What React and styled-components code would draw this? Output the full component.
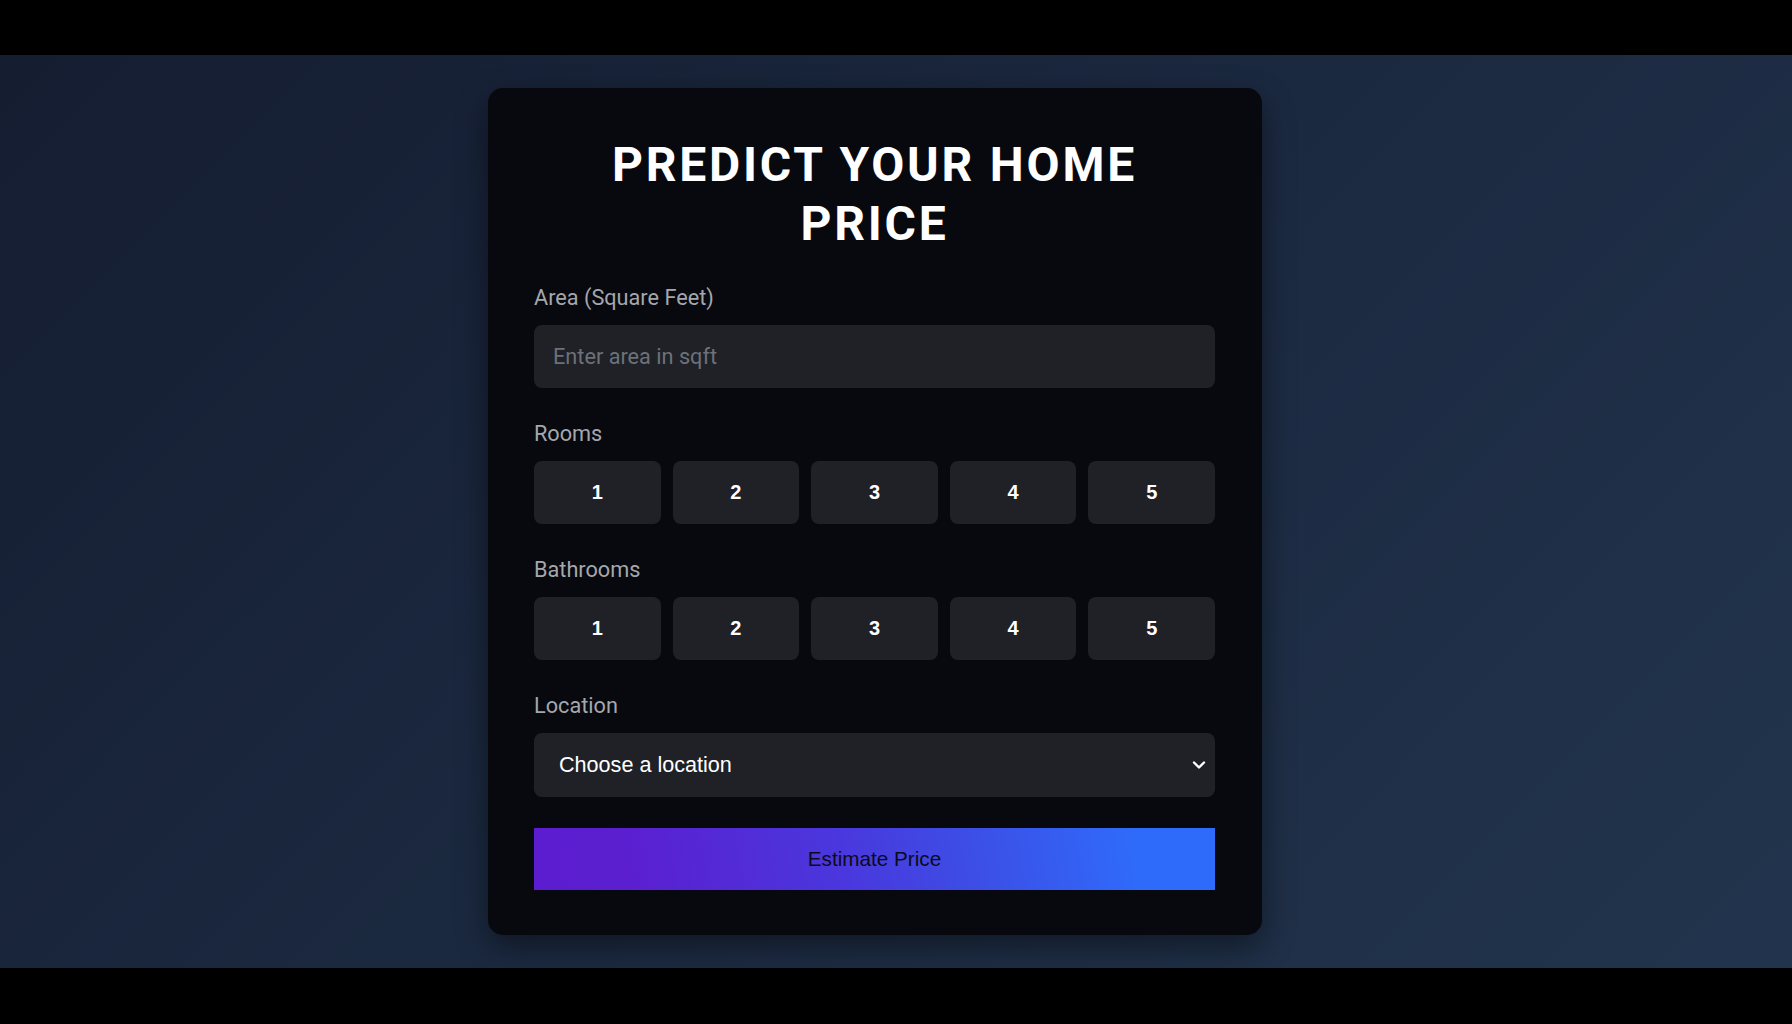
import React, { useState } from 'react';
import styled, { createGlobalStyle } from 'styled-components';

const GlobalStyle = createGlobalStyle`
  * {
    box-sizing: border-box;
  }
  html, body {
    margin: 0;
    padding: 0;
    background: #000;
    font-family: Roboto, "Liberation Sans", sans-serif;
  }
`;

const Page = styled.div`
  display: flex;
  flex-direction: column;
  width: 1792px;
  height: 1024px;
  background: #000;
`;

const Letterbox = styled.div`
  height: ${props => props.size}px;
  flex-shrink: 0;
  background: #000;
`;

const Stage = styled.main`
  height: 913px;
  display: flex;
  align-items: center;
  justify-content: center;
  padding: 0 42px 1px 0;
  background: linear-gradient(135deg, #151d31 0%, #1b2940 50%, #22344d 100%);
`;

const Card = styled.div`
  width: 774px;
  padding: 47px 47px 45px 46px;
  background: #07090e;
  border-radius: 15px;
  box-shadow: 0 12px 32px rgba(0, 0, 0, 0.45);
`;

const Title = styled.h1`
  margin: 0 0 32px;
  color: #fff;
  font-family: Roboto, "Liberation Sans", sans-serif;
  font-weight: 700;
  font-size: 48px;
  line-height: 59px;
  letter-spacing: 2.8px;
  text-align: center;
`;

const Field = styled.div`
  display: flex;
  flex-direction: column;
  margin-bottom: ${props => props.gap ?? 33}px;
`;

const Label = styled.label`
  display: block;
  margin-bottom: 15px;
  color: #a4a7ad;
  font-family: Roboto, "Liberation Sans", sans-serif;
  font-size: 21.7px;
  line-height: 25px;
`;

const TextInput = styled.input`
  height: 63px;
  width: 100%;
  padding: 0 19px;
  border: none;
  outline: none;
  border-radius: 8px;
  background: #1f2127;
  color: #fff;
  font-family: Roboto, "Liberation Sans", sans-serif;
  font-size: 21.7px;

  &::placeholder {
    color: #6d7179;
  }
`;

const Options = styled.div`
  display: grid;
  grid-template-columns: repeat(5, 1fr);
  gap: 12px;
`;

const OptionButton = styled.button`
  height: 63px;
  border: none;
  border-radius: 8px;
  background: ${props => (props.active ? '#2b2e36' : '#1f2127')};
  color: #fff;
  font-family: "Liberation Sans", Arial, sans-serif;
  font-weight: 700;
  font-size: 20px;
  cursor: pointer;
`;

const SelectWrap = styled.div`
  position: relative;
`;

const Select = styled.select`
  appearance: none;
  width: 100%;
  height: 64px;
  padding: 0 40px 0 25px;
  border: none;
  outline: none;
  border-radius: 8px;
  background: #1f2127;
  color: #fff;
  font-family: "Liberation Sans", Arial, sans-serif;
  font-size: 21.6px;
`;

const Chevron = styled.svg`
  position: absolute;
  right: 9px;
  top: 26px;
  pointer-events: none;
`;

const Submit = styled.button`
  width: 100%;
  height: 62px;
  border: none;
  background: linear-gradient(80deg, #5b1dcf 0%, #5b1fd0 14%, #4a37dd 45%, #3c4fe6 65%, #2f6bfa 88%, #2f6bfa 100%);
  color: #0b0b1a;
  font-family: "Liberation Sans", Arial, sans-serif;
  font-size: 20.7px;
  cursor: pointer;
`;

const counts = [1, 2, 3, 4, 5];

const App = () => {
  const [rooms, setRooms] = useState(null);
  const [baths, setBaths] = useState(null);

  return (
    <Page>
      <GlobalStyle />
      <Letterbox size={55} />
      <Stage>
        <Card>
          <Title>PREDICT YOUR HOME PRICE</Title>

          <Field>
            <Label>Area (Square Feet)</Label>
            <TextInput placeholder="Enter area in sqft" />
          </Field>

          <Field>
            <Label>Rooms</Label>
            <Options>
              {counts.map(n => (
                <OptionButton key={n} active={rooms === n} onClick={() => setRooms(n)}>
                  {n}
                </OptionButton>
              ))}
            </Options>
          </Field>

          <Field>
            <Label>Bathrooms</Label>
            <Options>
              {counts.map(n => (
                <OptionButton key={n} active={baths === n} onClick={() => setBaths(n)}>
                  {n}
                </OptionButton>
              ))}
            </Options>
          </Field>

          <Field gap={31}>
            <Label>Location</Label>
            <SelectWrap>
              <Select defaultValue="">
                <option value="">Choose a location</option>
              </Select>
              <Chevron width="14" height="12" viewBox="0 0 14 12">
                <path d="M2 3.5 L7 8.5 L12 3.5" fill="none" stroke="#fff" strokeWidth="2.4" strokeLinecap="round" strokeLinejoin="round" />
              </Chevron>
            </SelectWrap>
          </Field>

          <Submit>Estimate Price</Submit>
        </Card>
      </Stage>
      <Letterbox size={56} />
    </Page>
  );
};

export default App;
